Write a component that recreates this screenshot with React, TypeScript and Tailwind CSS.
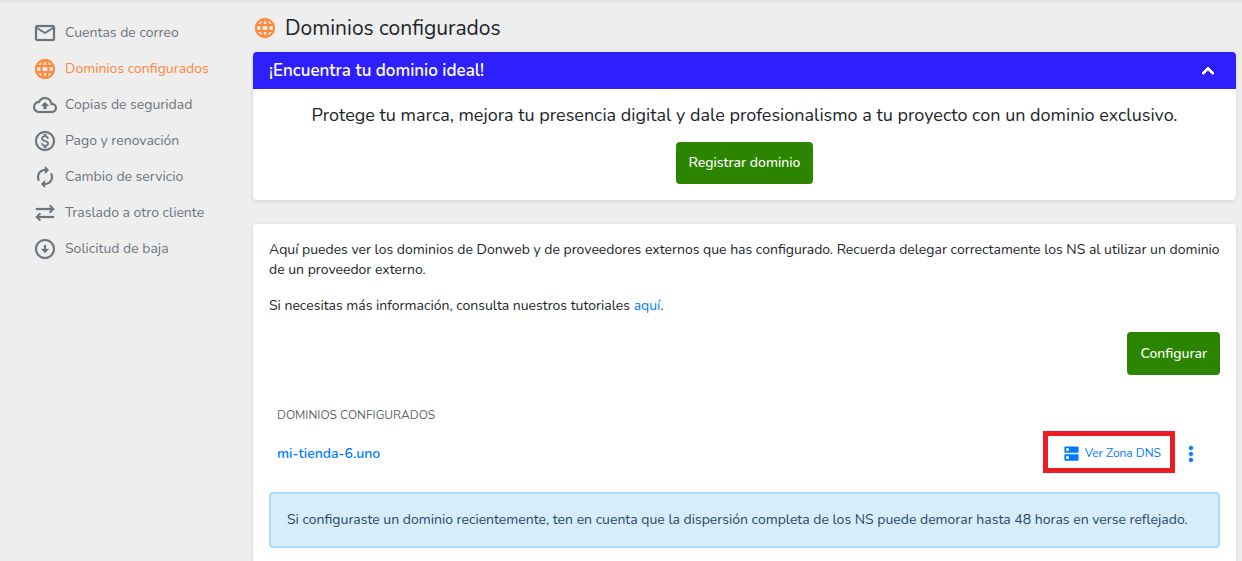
import { ReactNode } from "react";
import {
  MdAutorenew,
  MdDns,
  MdKeyboardArrowUp,
  MdLanguage,
  MdMoreVert,
  MdOutlineArrowCircleDown,
  MdOutlineBackup,
  MdOutlineEmail,
  MdOutlineMonetizationOn,
} from "react-icons/md";

const TransferIcon = () => (
  <svg viewBox="0 0 24 24" className="size-6 fill-current">
    <path d="M3 7h15l-2-2 1.300-1.300L21.600 8l-4.300 4.300L16 11l2-2H3z" />
    <path d="M21 15H6l2-2-1.300-1.300L2.400 16l4.300 4.300L8 19l-2-2h15z" />
  </svg>
);

const menu: { label: string; icon: ReactNode; active?: boolean }[] = [
  { label: "Cuentas de correo", icon: <MdOutlineEmail size={24} /> },
  {
    label: "Dominios configurados",
    icon: <MdLanguage size={24} />,
    active: true,
  },
  { label: "Copias de seguridad", icon: <MdOutlineBackup size={24} /> },
  { label: "Pago y renovación", icon: <MdOutlineMonetizationOn size={24} /> },
  { label: "Cambio de servicio", icon: <MdAutorenew size={24} /> },
  { label: "Traslado a otro cliente", icon: <TransferIcon /> },
  { label: "Solicitud de baja", icon: <MdOutlineArrowCircleDown size={24} /> },
];

const Sidebar = () => (
  <nav className="w-[253px] shrink-0 pt-[15px] pl-[33px] [&_path:not([fill=none])]:stroke-current [&_path:not([fill=none])]:stroke-[0.2]">
    <ul>
      {menu.map((item) => (
        <li key={item.label}>
          <a
            href="#"
            className={`flex h-9 items-center gap-2 whitespace-nowrap ${
              item.active ? "text-[#ff8839]" : "text-[#6c757d]"
            }`}
          >
            {item.icon}
            <span>{item.label}</span>
          </a>
        </li>
      ))}
    </ul>
  </nav>
);

const App = () => {
  return (
    <div
      className="flex min-h-screen bg-[#eeeeee] pr-1.5 text-sm leading-5 text-[#212529]
      font-[Nunito,'Noto_Sans',sans-serif] shadow-[inset_0_6px_4px_-5px_rgba(0,0,0,0.1)]"
    >
      <Sidebar />
      <main className="flex min-h-screen min-w-0 flex-1 flex-col">
        <h1 className="flex h-13 items-center gap-2 pt-1 text-[21px]">
          <MdLanguage
            size={24}
            className="text-[#ff8839] [&_path:not([fill=none])]:stroke-[0.2]"
          />
          Dominios configurados
        </h1>

        <section className="rounded bg-white pb-4 shadow-[0_1px_4px_rgba(0,0,0,0.12)]">
          <h2>
            <button
              type="button"
              aria-expanded="true"
              className="flex w-full items-center justify-between rounded-t bg-[#2e1fff] px-4 py-1.5
              text-[17px] leading-[25px] font-semibold text-white"
            >
              ¡Encuentra tu dominio ideal!
              <MdKeyboardArrowUp
                size={24}
                className="[&_path:not([fill=none])]:stroke-1"
              />
            </button>
          </h2>
          <p className="px-4 pt-3.5 text-center text-lg leading-6">
            Protege tu marca, mejora tu presencia digital y dale profesionalismo
            a tu proyecto con un dominio exclusivo.
          </p>
          <div className="mt-[15px] flex justify-center">
            <button
              type="button"
              className="h-[42px] rounded bg-[#2c8500] px-[13px] font-medium text-white"
            >
              Registrar dominio
            </button>
          </div>
        </section>

        <section className="mt-6 flex-1 rounded-t bg-white p-4 shadow-[0_1px_4px_rgba(0,0,0,0.12)]">
          <p>
            Aquí puedes ver los dominios de Donweb y de proveedores externos que
            has configurado. Recuerda delegar correctamente los NS al utilizar
            un dominio de un proveedor externo.
          </p>
          <p className="mt-4">
            Si necesitas más información, consulta nuestros tutoriales{" "}
            <a href="#" className="text-[#007bff]">
              aquí
            </a>
            .
          </p>
          <div className="mt-4 flex justify-end">
            <button
              type="button"
              className="h-[43px] rounded bg-[#2c8500] px-[13px] font-medium text-white"
            >
              Configurar
            </button>
          </div>

          <table className="mt-6 w-full">
            <thead>
              <tr>
                <th
                  colSpan={2}
                  className="px-2 py-1.5 text-left text-xs leading-5 font-normal text-[#666666] uppercase"
                >
                  Dominios configurados
                </th>
              </tr>
            </thead>
            <tbody>
              <tr>
                <td className="px-2 pt-1 font-semibold text-[#007bff]">
                  <a href="#">mi-tienda-6.uno</a>
                </td>
                <td className="pr-[17px]">
                  <div className="flex items-center justify-end gap-1 text-[#007bff]">
                    <a
                      href="#"
                      className="flex h-[42px] items-center gap-1 border-5 border-[#ed1c24] pt-0.5 pr-[9px] pl-3.5 text-xs"
                    >
                      <MdDns size={19} />
                      Ver Zona DNS
                    </a>
                    <button
                      type="button"
                      aria-label="Más opciones"
                      className="pt-1"
                    >
                      <MdMoreVert
                        size={24}
                        className="[&_path:not([fill=none])]:stroke-[0.4]"
                      />
                    </button>
                  </div>
                </td>
              </tr>
            </tbody>
          </table>

          <div
            role="alert"
            className="mt-[19px] rounded border-2 border-[#b0dcfc] bg-[#d7edfc] p-4 text-[#1f4a66]"
          >
            Si configuraste un dominio recientemente, ten en cuenta que la
            dispersión completa de los NS puede demorar hasta 48 horas en verse
            reflejado.
          </div>
        </section>
      </main>
    </div>
  );
};
export default App;
